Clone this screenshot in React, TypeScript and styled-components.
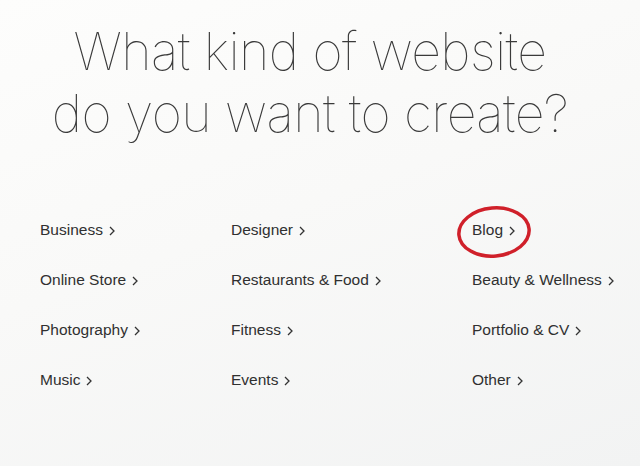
import styled, { createGlobalStyle } from 'styled-components';

const Global = createGlobalStyle`
  html, body { margin: 0; padding: 0; }
  body {
    background: linear-gradient(160deg, #fdfdfc 0%, #f9f9f8 45%, #f2f3f3 100%);
    min-height: 466px;
  }
`;

const categories = [
  'Business',
  'Designer',
  'Blog',
  'Online Store',
  'Restaurants & Food',
  'Beauty & Wellness',
  'Photography',
  'Fitness',
  'Portfolio & CV',
  'Music',
  'Events',
  'Other',
];

export default function App() {
  return (
    <>
      <Global />
      <Page>
        <Title>
          What kind of website
          <br />
          do you want to create?
        </Title>
        <Grid>
          {categories.map((name) => (
            <Item key={name}>
              <Label>{name}</Label>
              <Chevron viewBox="0 0 6 10" aria-hidden>
                <path d="M1 1l4 4-4 4" />
              </Chevron>
              {name === 'Blog' && (
                <Circle viewBox="0 0 80 56" aria-hidden>
                  <ellipse cx="40" cy="28" rx="35.2" ry="24" transform="rotate(-5 40 28)" />
                </Circle>
              )}
            </Item>
          ))}
        </Grid>
      </Page>
    </>
  );
}

const Page = styled.div`
  width: 640px;
  height: 466px;
  overflow: hidden;
  display: flex;
  flex-direction: column;
`;

const Title = styled.h1`
  margin: 0;
  padding: 21px 20px 0 0;
  text-align: center;
  font-family: 'Inter', 'Liberation Sans', sans-serif;
  font-weight: 100;
  font-size: 52px;
  line-height: 62px;
  letter-spacing: -0.6px;
  color: #3a3a3a;
`;

const Grid = styled.div`
  display: grid;
  grid-template-columns: 191px 241px 1fr;
  grid-auto-rows: 50px;
  padding: 60px 0 0 40px;
`;

const Item = styled.div`
  position: relative;
  display: flex;
  align-items: center;
  gap: 6px;
  align-self: start;
  height: 50px;
  font-family: 'Liberation Sans', Arial, sans-serif;
  font-size: 15.5px;
  color: #303030;
`;

const Label = styled.span`
  white-space: nowrap;
`;

const Chevron = styled.svg`
  width: 6px;
  height: 10px;
  margin-top: 1px;
  fill: none;
  stroke: #333;
  stroke-width: 1.3;
`;

const Circle = styled.svg`
  position: absolute;
  left: -18px;
  top: -1.5px;
  width: 80px;
  height: 56px;
  fill: none;
  stroke: #d0202a;
  stroke-width: 3.5;
  overflow: visible;
`;
